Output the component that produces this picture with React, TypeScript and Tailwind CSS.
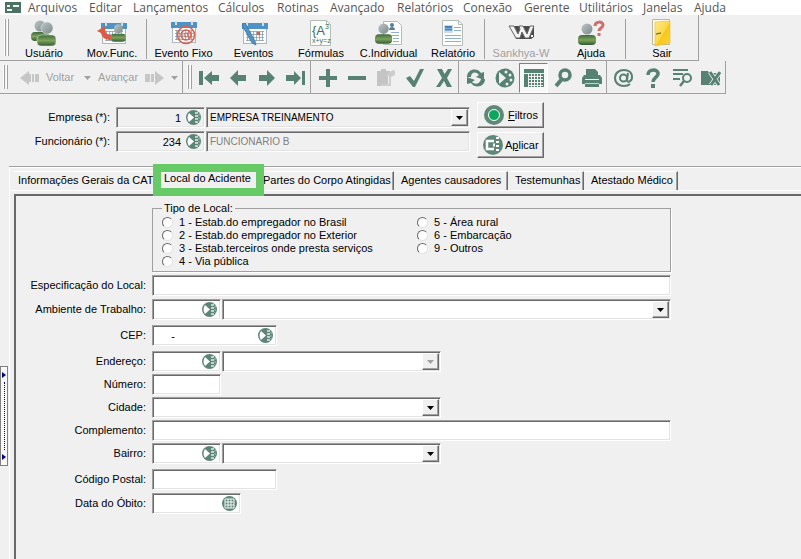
import type { ReactNode } from 'react';
import clsx from 'clsx';

const sunken =
  'border border-t-[#a0a0a0] border-l-[#a0a0a0] border-r-white border-b-white shadow-[inset_1px_1px_0_#696969,inset_-1px_-1px_0_#e3e3e3]';
const raised =
  'border border-t-white border-l-white border-r-[#696969] border-b-[#696969] shadow-[inset_-1px_-1px_0_#a0a0a0]';

const menus = [
  { label: 'Arquivos', width: 'w-[61px]' },
  { label: 'Editar', width: 'w-[44px]' },
  { label: 'Lançamentos', width: 'w-[85px]' },
  { label: 'Cálculos', width: 'w-[59px]' },
  { label: 'Rotinas', width: 'w-[53px]' },
  { label: 'Avançado', width: 'w-[67px]' },
  { label: 'Relatórios', width: 'w-[66px]' },
  { label: 'Conexão', width: 'w-[61px]' },
  { label: 'Gerente', width: 'w-[55px]' },
  { label: 'Utilitários', width: 'w-[64px]' },
  { label: 'Janelas', width: 'w-[51px]' },
  { label: 'Ajuda', width: 'w-[45px]' },
];

/* ---------- Icons of the main toolbar ---------- */

function Gradients() {
  return (
    <svg className="absolute h-0 w-0" aria-hidden="true">
      <defs>
        <linearGradient id="head" x1="0" y1="0" x2="1" y2="1">
          <stop offset="0" stopColor="#bcc6c6" />
          <stop offset="1" stopColor="#7c8a8a" />
        </linearGradient>
        <linearGradient id="body" x1="0" y1="0" x2="0" y2="1">
          <stop offset="0" stopColor="#3c6a3a" />
          <stop offset="0.5" stopColor="#7da35c" />
          <stop offset="1" stopColor="#2f5a32" />
        </linearGradient>
        <linearGradient id="door" x1="0" y1="0" x2="1" y2="1">
          <stop offset="0" stopColor="#ffe98a" />
          <stop offset="0.5" stopColor="#fbd84a" />
          <stop offset="0.55" stopColor="#f7c71c" />
          <stop offset="1" stopColor="#fbd433" />
        </linearGradient>
      </defs>
    </svg>
  );
}

function Person({ x = 0, y = 0, size = 1 }: { x?: number; y?: number; size?: number }) {
  return (
    <g transform={`translate(${x} ${y}) scale(${size})`}>
      <rect x="0" y="13" width="18" height="10" rx="4" fill="url(#body)" />
      <circle cx="9" cy="7" r="5.500" fill="url(#head)" />
    </g>
  );
}

function Calendar({ x = 0, y = 0 }: { x?: number; y?: number }) {
  return (
    <g transform={`translate(${x} ${y})`}>
      <rect x="1.500" y="3.500" width="23" height="19" fill="#fafcfd" stroke="#a9b8c2" />
      <path d="M0 2h26v6H0z" fill="#4f93c4" />
      <path d="M5 1v4M21 1v4" stroke="#d5dde2" strokeWidth="2" />
      <path d="M4 10.500h18M4 13.500h18M4 16.500h18M4 19.500h18M5.500 10v10M8.500 10v10M11.500 10v10M14.500 10v10M17.500 10v10M20.500 10v10" stroke="#8f9ca4" strokeWidth="0.800" />
    </g>
  );
}

function MainIcon({ children }: { children: ReactNode }) {
  return (
    <svg width="32" height="28" viewBox="0 0 32 28" fill="none" className="shrink-0" aria-hidden="true">
      {children}
    </svg>
  );
}

function Sheet() {
  return (
    <>
      <path d="M5.500 1.500h16l4 4v21h-20z" fill="#fdfdfb" stroke="#b4bcb6" />
      <path d="M21.500 1.500v4h4" stroke="#b4bcb6" />
    </>
  );
}

const UsersIcon = (
  <MainIcon>
    <rect x="3" y="13" width="18" height="9" rx="4" fill="url(#body)" />
    <circle cx="12" cy="7" r="5.500" fill="url(#head)" />
    <rect x="9" y="16" width="19" height="11" rx="4" fill="url(#body)" stroke="#f0f0f0" strokeWidth="0.500" />
    <circle cx="19" cy="9" r="6" fill="url(#head)" stroke="#e4e8e8" strokeWidth="0.500" />
  </MainIcon>
);
const MoveIcon = (
  <MainIcon>
    <Calendar x={5} y={2} />
    <path d="M1 12l8-5v4c1 4 3 5 6 5v5c-5 0-9-2-10-7z" fill="#dd5a44" />
    <Person x={15} y={4} size={0.82} />
  </MainIcon>
);
const FixedIcon = (
  <MainIcon>
    <Calendar x={3} y={1} />
    <circle cx="18" cy="16" r="8.500" stroke="#d9614f" strokeWidth="1.600" />
    <circle cx="18" cy="16" r="5" stroke="#d9614f" strokeWidth="1.500" />
    <circle cx="18" cy="16" r="2" stroke="#d9614f" />
    <path d="M20 13v4c0 3 3 2 3-1" stroke="#d9614f" />
  </MainIcon>
);
const EventsIcon = (
  <MainIcon>
    <Calendar x={4} y={2} />
    <path d="M19 13h3v3h-3z" fill="#dd5a44" />
    <path d="M4 6l3-2 10 18 1 4-4-2z" fill="#5093c6" stroke="#376f9b" strokeWidth="0.700" />
  </MainIcon>
);
const FormulaIcon = (
  <MainIcon>
    <Sheet />
    <text x="7" y="16" className="font-['Liberation_Sans'] text-[13px]" fill="#3e6f5f">{'{A'}</text>
    <text x="20" y="10" className="font-['Liberation_Sans'] text-[7px]" fill="#3e6f5f">3</text>
    <text x="7" y="24" className="font-['Liberation_Sans'] text-[7px]" fill="#3e6f5f">x+y=z</text>
  </MainIcon>
);
const IndividualIcon = (
  <MainIcon>
    <path d="M10.500 2.500h14l4 4v19h-18z" fill="#fdfdfb" stroke="#b4bcb6" />
    <circle cx="19" cy="6" r="2" fill="#4f7f9b" />
    <path d="M16 11c0-4 6-4 6 0z" fill="#4f7f9b" />
    <path d="M18 13.500h8M18 16.500h8M20 19.500h6M20 22.500h6" stroke="#8eb0cc" />
    <Person x={2} y={3} size={0.95} />
  </MainIcon>
);
const ReportIcon = (
  <MainIcon>
    <Sheet />
    <path d="M7 6h9v8H7z" fill="#c8dcee" />
    <path d="M8 8h7M8 10.500h7" stroke="#4582bd" strokeWidth="2" />
    <path d="M17 8.500h7M17 11.500h7M8 16.500h16M8 19.500h16M8 22.500h16" stroke="#8eb0cc" />
  </MainIcon>
);
const SankhyaIcon = (
  <MainIcon>
    <path d="M5 7h24v11l-3 2H11z" fill="#4a4a4a" />
    <path d="M4 7h5l4 8 2-5-1-3h4l4 8 3-8h4l-5 12h-4l-3-6-2 6h-4z" fill="#f4f4f4" stroke="#666" />
    <path d="M26 16h2v2h-2z" fill="#fff" />
  </MainIcon>
);
const HelpPersonIcon = (
  <MainIcon>
    <Person x={3} y={3} />
    <path d="M20 7c0-5 8-5 8-1 0 3-4 3-4 6" stroke="#cf7068" strokeWidth="3" />
    <path d="M22.500 14h3v3h-3z" fill="#cf7068" />
  </MainIcon>
);
const DoorIcon = (
  <MainIcon>
    <path d="M6.500 0.500h17v25h-17z" fill="#fffbe8" stroke="#bcb8a0" />
    <path d="M9 3l15-1v22L9 27z" fill="url(#door)" stroke="#e2bd3b" strokeWidth="0.600" />
    <path d="M10 15l5-1" stroke="#8a7a38" strokeWidth="1.500" />
  </MainIcon>
);

/* ---------- Icons of the navigation toolbar ---------- */

function NavIcon({ children }: { children: ReactNode }) {
  return (
    <svg width="20" height="20" viewBox="0 0 20 20" fill="#578173" stroke="none" aria-hidden="true">
      {children}
    </svg>
  );
}

const firstIcon = <NavIcon><path d="M0 3h4v14H0zM5 10l8-7v4h7v6h-7v4z" /></NavIcon>;
const previousIcon = <NavIcon><path d="M2 10l8-8v5h8v6h-8v5z" /></NavIcon>;
const nextIcon = <NavIcon><path d="M18 10l-8-8v5H2v6h8v5z" /></NavIcon>;
const lastIcon = <NavIcon><path d="M16 3h3v14h-3zM15 10L8 3v4H0v6h8v4z" /></NavIcon>;
const addIcon = <NavIcon><path d="M8 1h4v7h7v4h-7v7H8v-7H1V8h7z" /></NavIcon>;
const removeIcon = <NavIcon><path d="M1 8h18v4H1z" /></NavIcon>;
const duplicateIcon = (
  <NavIcon>
    <path d="M1 3h4V1h5v2h4v5h-2v10H1z" fill="#c4c4c4" />
    <path d="M12 5l5-3 2 1v4l-4 2v9H5v-2h8V8h-3z" fill="#cecece" />
  </NavIcon>
);
const confirmIcon = <NavIcon><path d="M1 10l4-2 4 5 6-12h4L10 19H8z" /></NavIcon>;
const cancelIcon = <NavIcon><path d="M3 1h5l2.500 5L14 1h4l-5 9 5 9h-5l-3-6-4 6H2l6-9z" /></NavIcon>;
const refreshIcon = (
  <NavIcon>
    <path d="M1 9C1 1 11-1 15 5l3-1v8l-8-3 3-2C10 3 5 4 5 9z" />
    <path d="M19 11c0 8-10 10-14 4l-4 1V9l8 3-3 2c3 3 8 2 9-3z" />
  </NavIcon>
);
const reelIcon = (
  <NavIcon>
    <circle cx="10" cy="10" r="9.500" />
    <path d="M4 4l7 6-7 6z" fill="#f0f0f0" />
    <circle cx="11" cy="4" r="1.500" fill="#f0f0f0" />
    <circle cx="15" cy="7" r="1.500" fill="#f0f0f0" />
    <circle cx="16" cy="12" r="1.500" fill="#f0f0f0" />
    <circle cx="12" cy="16" r="1.500" fill="#f0f0f0" />
  </NavIcon>
);
const gridIcon = (
  <NavIcon>
    <path d="M0 1h20v18H0z" />
    <path d="M0 5.500h20M4.500 5v14M7.500 6v13M10.500 6v13M13.500 6v13M16.500 6v13M5 8.500h14M5 11.500h14M5 14.500h14M5 17.500h14" stroke="#f0f0f0" />
  </NavIcon>
);
const searchIcon = (
  <NavIcon>
    <circle cx="12" cy="7" r="5" fill="none" stroke="#578173" strokeWidth="3.500" />
    <path d="M9 11l-6 7" stroke="#578173" strokeWidth="4" />
  </NavIcon>
);
const printIcon = (
  <NavIcon>
    <path d="M4 1h9l3 3v4H4z" />
    <path d="M2 7h16l2 3v6H0v-6z" />
    <path d="M3 11.500h14" stroke="#f0f0f0" />
    <path d="M3 15h14v4H3z" />
    <path d="M3 15.500h14" stroke="#c8d4cf" />
  </NavIcon>
);
const atIcon = (
  <NavIcon>
    <circle cx="9.500" cy="10" r="3.500" fill="none" stroke="#578173" strokeWidth="2" />
    <path d="M14 5l-1 7c0 3 5 2 5-3 0-5-4-7-8-7-5 0-9 3-9 8s4 8 9 8c3 0 5-1 6-2" fill="none" stroke="#578173" strokeWidth="2" />
  </NavIcon>
);
const questionIcon = (
  <NavIcon>
    <path d="M5 7c0-7 11-6 10-1 0 3-5 4-5 8" fill="none" stroke="#578173" strokeWidth="3.500" />
    <path d="M8 16h4v4H8z" />
  </NavIcon>
);
const listSearchIcon = (
  <NavIcon>
    <path d="M1 1h15v2H1zM1 5h10v2H1zM1 10h7v2H1z" />
    <circle cx="15" cy="10" r="4" fill="#f0f0f0" stroke="#578173" strokeWidth="2" />
    <path d="M12 13l-4 5" stroke="#578173" strokeWidth="2.500" />
  </NavIcon>
);
const closeFolderIcon = (
  <NavIcon>
    <path d="M0 3h7l1 2h11v12H0z" />
    <path d="M9 4l9 13M19 4l-9 13" stroke="#f0f0f0" strokeWidth="4.500" />
    <path d="M9 4l9 13M19 4l-9 13" stroke="#578173" strokeWidth="3" />
  </NavIcon>
);

type Tool = { label: string; icon: ReactNode; disabled?: boolean; pressed?: boolean };

const mainTools: (Tool & { width: string })[][] = [
  [
    { label: 'Usuário', icon: UsersIcon, width: 'w-[68px]' },
    { label: 'Mov.Func.', icon: MoveIcon, width: 'w-[68px]' },
  ],
  [
    { label: 'Evento Fixo', icon: FixedIcon, width: 'w-[73px]' },
    { label: 'Eventos', icon: EventsIcon, width: 'w-[67px]' },
    { label: 'Fórmulas', icon: FormulaIcon, width: 'w-[68px]' },
    { label: 'C.Individual', icon: IndividualIcon, width: 'w-[67px]' },
    { label: 'Relatório', icon: ReportIcon, width: 'w-[62px]' },
  ],
  [
    { label: 'Sankhya-W', icon: SankhyaIcon, disabled: true, width: 'w-[72px]' },
    { label: 'Ajuda', icon: HelpPersonIcon, width: 'w-[68px]' },
  ],
  [{ label: 'Sair', icon: DoorIcon, width: 'w-[72px]' }],
];

const navTools: Tool[][] = [
  [
    { label: 'Primeiro', icon: firstIcon },
    { label: 'Anterior', icon: previousIcon },
    { label: 'Próximo', icon: nextIcon },
    { label: 'Último', icon: lastIcon },
  ],
  [
    { label: 'Incluir', icon: addIcon },
    { label: 'Excluir', icon: removeIcon },
    { label: 'Duplicar', icon: duplicateIcon, disabled: true },
    { label: 'Confirmar', icon: confirmIcon },
    { label: 'Cancelar', icon: cancelIcon },
  ],
  [
    { label: 'Atualizar', icon: refreshIcon },
    { label: 'Executar', icon: reelIcon },
    { label: 'Grade', icon: gridIcon, pressed: true },
    { label: 'Procurar', icon: searchIcon },
    { label: 'Imprimir', icon: printIcon },
  ],
  [
    { label: 'E-mail', icon: atIcon },
    { label: 'Ajuda', icon: questionIcon },
    { label: 'Localizar', icon: listSearchIcon },
    { label: 'Fechar', icon: closeFolderIcon },
  ],
];

function Grip() {
  return (
    <div className="my-1 flex shrink-0 gap-px self-stretch">
      <div className="w-[2px] border-r border-[#a0a0a0] bg-white" />
      <div className="w-[2px] border-r border-[#a0a0a0] bg-white" />
    </div>
  );
}

function MenuBar() {
  return (
    <nav className="flex h-[15px] shrink-0 items-center bg-white font-['Open_Sans',sans-serif] text-[12px] leading-[14px] text-[#555]">
      <svg width="16" height="12" viewBox="0 0 16 12" className="mr-[7px] ml-[5px] shrink-0" aria-hidden="true">
        <path d="M0 0h16v11H0z" fill="#4c7264" />
        <path d="M2 3h3v2H2zM2 7h5v2H2zM8 3h6v2H8z" fill="#eef3f1" />
      </svg>
      {menus.map((menu) => (
        <button key={menu.label} className={clsx('shrink-0 text-left whitespace-nowrap', menu.width)}>
          {menu.label}
        </button>
      ))}
    </nav>
  );
}

function MainToolbar() {
  return (
    <div className="flex h-[46px] shrink-0 self-start border-r border-b border-[#a0a0a0] pl-[4px]">
      <Grip />
      {mainTools.map((group, index) => (
        <div
          key={index}
          className={clsx('mt-[4px] mb-px flex', index > 0 ? 'border-l border-[#a0a0a0]' : 'pl-px')}
        >
          {group.map((tool) => (
            <button
              key={tool.label}
              disabled={tool.disabled}
              className={clsx(
                'flex shrink-0 flex-col items-center leading-[12px] whitespace-nowrap',
                tool.width,
                tool.disabled ? 'text-[#a0a0a0]' : 'text-black',
              )}
            >
              {tool.icon}
              <span>{tool.label}</span>
            </button>
          ))}
        </div>
      ))}
    </div>
  );
}

function HistoryArrow({ forward }: { forward?: boolean }) {
  return (
    <svg width="19" height="14" viewBox="0 0 19 14" fill="#c6c6c6" aria-hidden="true">
      {forward ? (
        <path d="M0 3h5v8H0zM6 3h3v8H6zM10 3V0l9 7-9 7v-3z" />
      ) : (
        <path d="M19 3h-4v8h4zM14 3h-2v8h2zM11 3H9V0L0 7l9 7v-3h2z" />
      )}
    </svg>
  );
}

function Caret() {
  return (
    <svg width="7" height="4" viewBox="0 0 7 4" aria-hidden="true">
      <path d="M0 0h7L3.500 4z" fill="currentColor" />
    </svg>
  );
}

function NavToolbar() {
  return (
    <div className="flex h-[33px] shrink-0 self-start border-r border-b border-[#a0a0a0] pl-[3px]">
      <Grip />
      <div className="flex w-[175px] shrink-0 items-center border-r border-[#a0a0a0] pt-px pl-[12px] text-[#a0a0a0]">
        <button disabled className="flex w-[64px] items-center gap-[7px]">
          <HistoryArrow />
          Voltar
        </button>
        <button disabled aria-label="Histórico anterior" className="w-[14px]">
          <Caret />
        </button>
        <button disabled className="flex w-[73px] items-center gap-[7px]">
          Avançar
          <HistoryArrow forward />
        </button>
        <button disabled aria-label="Histórico seguinte" className="w-[7px]">
          <Caret />
        </button>
      </div>
      <div className="flex pl-[4px]">
        <Grip />
      </div>
      {navTools.map((group, index) => (
        <div
          key={index}
          className={clsx('flex items-center pt-px pl-[2px]', index > 0 && 'border-l border-[#a0a0a0]')}
        >
          {group.map((tool) => (
            <button
              key={tool.label}
              aria-label={tool.label}
              aria-pressed={tool.pressed}
              disabled={tool.disabled}
              className={clsx(
                'flex h-[30px] w-[29px] shrink-0 items-center justify-center',
                tool.pressed && 'border border-t-[#808080] border-l-[#808080] border-r-white border-b-white bg-[#f8f8f8]',
              )}
            >
              {tool.icon}
            </button>
          ))}
        </div>
      ))}
    </div>
  );
}

/* ---------- Form controls ---------- */

function Lookup({ calendar }: { calendar?: boolean }) {
  return (
    <svg width="15" height="15" viewBox="0 0 15 15" aria-hidden="true">
      <circle cx="7.500" cy="7.500" r="7.500" fill="#5c8578" />
      {calendar ? (
        <path d="M3 3h9v9H3zM3 6h9M3 9h9M6 3v9M9 3v9" fill="none" stroke="#f4f7f6" />
      ) : (
        <>
          <path d="M3 3l5 4.500L3 12c-2-3-2-6 0-9z" fill="#fff" />
          <path d="M10.500 2v11" stroke="#c3d2cc" strokeWidth="3" strokeDasharray="2 1" />
          <path d="M13 4v7" stroke="#a9beb6" strokeDasharray="2 1" />
        </>
      )}
    </svg>
  );
}

type InputProps = {
  id: string;
  label?: string;
  width: string;
  value?: string;
  lookup?: boolean;
  calendar?: boolean;
  gray?: boolean;
  disabled?: boolean;
  text?: string;
};

function Input({ id, label, width, value, lookup, calendar, gray, disabled, text }: InputProps) {
  return (
    <div className={clsx('flex h-[21px] items-center', sunken, width, gray ? 'bg-[#f0f0f0]' : 'bg-white')}>
      <input
        id={id}
        aria-label={label}
        defaultValue={value}
        disabled={disabled}
        className={clsx(
          'h-full min-w-0 flex-1 bg-transparent px-[3px] outline-none',
          text,
          disabled && 'text-[#808080]',
        )}
      />
      {(lookup || calendar) && (
        <button type="button" aria-label="Pesquisar" className="mr-[3px] ml-[2px] shrink-0">
          <Lookup calendar={calendar} />
        </button>
      )}
    </div>
  );
}

type SelectProps = {
  id: string;
  label?: string;
  value?: string;
  width: string;
  gray?: boolean;
  disabled?: boolean;
  text?: string;
};

function Select({ id, label, value, width, gray, disabled, text }: SelectProps) {
  return (
    <div className={clsx('relative h-[21px]', sunken, width, gray ? 'bg-[#f0f0f0]' : 'bg-white')}>
      <select
        id={id}
        aria-label={label}
        disabled={disabled}
        className={clsx('h-full w-full appearance-none bg-transparent pr-5 pl-[3px] outline-none', text)}
      >
        <option>{value ?? ''}</option>
      </select>
      <span
        className={clsx(
          'pointer-events-none absolute top-px right-px bottom-px flex w-[17px] items-center justify-center bg-[#f0f0f0]',
          raised,
          disabled ? 'text-[#a0a0a0]' : 'text-black',
        )}
      >
        <Caret />
      </span>
    </div>
  );
}

function Row({ id, label, gap, children }: { id: string; label: string; gap: string; children: ReactNode }) {
  return (
    <div className={clsx('flex items-center', gap)}>
      <label htmlFor={id} className="w-[130px] shrink-0 pr-[6px] text-right whitespace-nowrap">
        {label}
      </label>
      <div className="flex min-w-0 flex-1 gap-px">{children}</div>
    </div>
  );
}

function FilterHeader() {
  return (
    <header className="flex gap-[7px] border-b border-[#a0a0a0] py-[8px]">
      <div className="flex max-w-[461px] flex-1 flex-col gap-[3px] pt-[5px]">
        <div className="flex items-center">
          <label htmlFor="empresa" className="w-[107px] shrink-0 pr-[6px] text-right">Empresa (*):</label>
          <div className="flex min-w-0 flex-1 gap-px">
            <Input id="empresa" width="w-[89px]" value="1" lookup gray text="text-right" />
            <Select id="empresa-nome" label="Nome da empresa" width="flex-1" value="EMPRESA TREINAMENTO" gray text="text-[10px]" />
          </div>
        </div>
        <div className="flex items-center">
          <label htmlFor="funcionario" className="w-[107px] shrink-0 pr-[6px] text-right">Funcionário (*):</label>
          <div className="flex min-w-0 flex-1 gap-px">
            <Input id="funcionario" width="w-[89px]" value="234" lookup gray text="text-right" />
            <Input id="funcionario-nome" label="Nome do funcionário" width="flex-1" value="FUNCIONARIO B" gray disabled text="text-[10px]" />
          </div>
        </div>
      </div>
      <div className="flex w-[67px] shrink-0 flex-col gap-[4px]">
        <button className={clsx('flex h-[26px] items-center gap-[4px] pl-[6px]', raised)}>
          <svg width="20" height="20" viewBox="0 0 20 20" aria-hidden="true">
            <circle cx="10" cy="10" r="10" fill="#5f887a" />
            <circle cx="10" cy="10" r="5.500" fill="#0ca85a" stroke="#fff" />
          </svg>
          <span><u>F</u>iltros</span>
        </button>
        <button className={clsx('flex h-[26px] items-center gap-[2px] pl-[5px]', raised)}>
          <svg width="20" height="20" viewBox="0 0 20 20" aria-hidden="true">
            <circle cx="10" cy="10" r="10" fill="#5f887a" />
            <path d="M11 6H4v8h7" fill="none" stroke="#fff" strokeWidth="2.500" />
            <path d="M10 8.500h2v3h-2z" fill="#fff" />
            <path d="M14.500 2v16" stroke="#fff" strokeWidth="3" strokeDasharray="2 2" />
          </svg>
          <span>A<u>p</u>licar</span>
        </button>
      </div>
    </header>
  );
}

const tabs = [
  { label: 'Informações Gerais da CAT', width: 'w-[146px] pl-[5px]' },
  { label: 'Local do Acidente', width: 'w-[100px] pl-[5px]', active: true },
  { label: 'Partes do Corpo Atingidas', width: 'w-[135px] pl-[4px]' },
  { label: 'Agentes causadores', width: 'w-[114px] pl-[7px]' },
  { label: 'Testemunhas', width: 'w-[76px] pl-[7px]' },
  { label: 'Atestado Médico', width: 'w-[94px] pl-[7px]' },
];

function Tabs() {
  return (
    <div role="tablist" className="flex h-[23px] items-end border-b border-white pt-[4px] pl-[3px]">
      {tabs.map((tab) => (
        <button
          key={tab.label}
          role="tab"
          aria-selected={!!tab.active}
          className={clsx(
            'relative h-[19px] shrink-0 border-t border-t-white text-left whitespace-nowrap',
            tab.width,
            tab.active ? 'pb-[5px]' : 'border-r border-r-[#696969] pb-px shadow-[inset_-1px_0_0_#a0a0a0]',
          )}
        >
          {tab.label}
          {tab.active && (
            <span className="absolute -top-[8px] -left-[6px] z-10 h-[32px] w-[111px] border-8 border-[#66cb66]" />
          )}
        </button>
      ))}
    </div>
  );
}

const placeTypes = [
  [
    '1 - Estab.do empregador no Brasil',
    '2 - Estab.do empregador no Exterior',
    '3 - Estab.terceiros onde presta serviços',
    '4 - Via pública',
  ],
  ['5 - Área rural', '6 - Embarcação', '9 - Outros'],
];

function PlaceType() {
  return (
    <fieldset className="ml-[130px] h-[70px] border border-[#a0a0a0] px-[9px] shadow-[1px_1px_0_#fff]">
      <legend className="px-[2px] leading-[12px]">Tipo de Local:</legend>
      <div className="flex pt-[2px]">
        {placeTypes.map((column, index) => (
          <div key={index} className={index === 0 ? 'w-[255px]' : ''}>
            {column.map((option) => (
              <label key={option} className="flex h-[13px] items-center gap-[6px] whitespace-nowrap">
                <input
                  type="radio"
                  name="tipo-local"
                  className="h-[11px] w-[11px] shrink-0 appearance-none rounded-full border border-t-[#696969] border-r-[#e3e3e3] border-b-[#e3e3e3] border-l-[#696969] bg-white checked:bg-black"
                />
                {option}
              </label>
            ))}
          </div>
        ))}
      </div>
    </fieldset>
  );
}

function AccidentForm() {
  return (
    <form className="max-w-[656px] pt-[6px] pr-px pl-[6px]">
      <PlaceType />
      <Row id="especificacao" label="Especificação do Local:" gap="mt-[3px]">
        <Input id="especificacao" width="flex-1" />
      </Row>
      <Row id="ambiente" label="Ambiente de Trabalho:" gap="mt-[3px]">
        <Input id="ambiente" width="w-[69px]" lookup />
        <Select id="ambiente-nome" label="Nome do ambiente" width="flex-1" />
      </Row>
      <Row id="cep" label="CEP:" gap="mt-[5px]">
        <Input id="cep" width="w-[125px]" value="     -" lookup />
      </Row>
      <Row id="endereco" label="Endereço:" gap="mt-[5px]">
        <Input id="endereco" width="w-[69px]" lookup />
        <Select id="endereco-nome" label="Nome do endereço" width="w-[219px]" disabled />
      </Row>
      <Row id="numero" label="Número:" gap="mt-[2px]">
        <Input id="numero" width="w-[69px]" />
      </Row>
      <Row id="cidade" label="Cidade:" gap="mt-[2px]">
        <Select id="cidade" width="w-[289px]" />
      </Row>
      <Row id="complemento" label="Complemento:" gap="mt-[2px]">
        <Input id="complemento" width="flex-1" />
      </Row>
      <Row id="bairro" label="Bairro:" gap="mt-[2px]">
        <Input id="bairro" width="w-[69px]" lookup />
        <Select id="bairro-nome" label="Nome do bairro" width="w-[219px]" />
      </Row>
      <Row id="codigo-postal" label="Código Postal:" gap="mt-[5px]">
        <Input id="codigo-postal" width="w-[125px]" />
      </Row>
      <Row id="obito" label="Data do Óbito:" gap="mt-[3px]">
        <Input id="obito" width="w-[89px]" calendar />
      </Row>
    </form>
  );
}

function Splitter() {
  return (
    <div className="flex w-[9px] shrink-0 flex-col pt-[272px]">
      <button
        aria-label="Expandir painel"
        className="flex h-[100px] w-[8px] flex-col items-center justify-between border border-[#808080] bg-[#f8f8f8] py-[5px] text-[#000080]"
      >
        <svg width="4" height="6" viewBox="0 0 4 6" aria-hidden="true"><path d="M0 0l4 3-4 3z" fill="currentColor" /></svg>
        <span className="my-1 flex-1 border-l border-dotted border-[#000080]" />
        <svg width="4" height="6" viewBox="0 0 4 6" aria-hidden="true"><path d="M0 0l4 3-4 3z" fill="currentColor" /></svg>
      </button>
    </div>
  );
}

export default function App() {
  return (
    <div className="flex min-h-screen flex-col overflow-hidden bg-[#f0f0f0] font-['Liberation_Sans',Arial,sans-serif] text-[11px] leading-[13px] text-black">
      <Gradients />
      <MenuBar />
      <MainToolbar />
      <NavToolbar />
      <div className="flex flex-1">
        <Splitter />
        <main className="flex min-w-0 flex-1 flex-col">
          <FilterHeader />
          <section className="flex flex-1 flex-col border-t border-l border-white">
            <Tabs />
            <div className="mt-[3px] ml-[4px] flex-1 border-t-2 border-l-2 border-[#696969]">
              <AccidentForm />
            </div>
          </section>
        </main>
      </div>
    </div>
  );
}
